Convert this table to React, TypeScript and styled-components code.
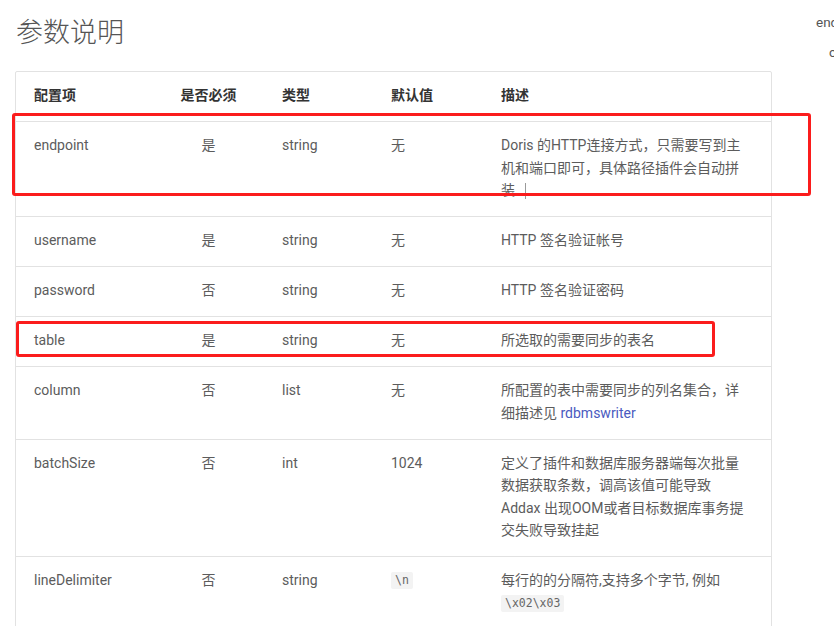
import React from "react";
import styled, { createGlobalStyle } from "styled-components";

const Global = createGlobalStyle`
  html, body {
    margin: 0;
    padding: 0;
    background: #ffffff;
    overflow: hidden;
  }
  body {
    font-family: Roboto, "Noto Sans CJK SC", "Noto Sans", sans-serif;
  }
`;

const Page = styled.div`
  position: relative;
  display: flex;
  align-items: flex-start;
  width: 834px;
  height: 626px;
  overflow: hidden;
`;

const Main = styled.main`
  flex: 0 0 auto;
  width: 757px;
  padding: 15px 0 0 15px;
`;

const Title = styled.h1`
  margin: 0 0 20px 1px;
  font-family: Roboto, "Noto Sans CJK SC", sans-serif;
  font-size: 27px;
  line-height: 36px;
  font-weight: 300;
  color: #555555;
  letter-spacing: 0;
`;

const Table = styled.table`
  width: 757px;
  table-layout: fixed;
  border-collapse: separate;
  border-spacing: 0;
  border: 1px solid #e2e2e2;
  border-radius: 2px;
  font-size: 14px;
  line-height: 22px;
`;

const Th = styled.th<{ $center?: boolean }>`
  padding: 12px 18px 15px;
  text-align: ${(p) => (p.$center ? "center" : "left")};
  font-weight: 700;
  color: #333333;
  vertical-align: top;
`;

const Td = styled.td<{ $center?: boolean; $wide?: boolean }>`
  padding: 12.2px ${(p) => (p.$wide ? "22px" : "18px")} 14.5px 18px;
  border-top: 1px solid #e2e2e2;
  text-align: ${(p) => (p.$center ? "center" : "left")};
  color: #5c5c5c;
  vertical-align: top;
  line-height: 22.4px;
  word-break: normal;
`;

const Code = styled.code`
  display: inline-block;
  padding: 0 4px;
  background: #f3f3f3;
  border-radius: 2px;
  font-family: "DejaVu Sans Mono", "Liberation Mono", monospace;
  font-size: 11.5px;
  line-height: 17px;
  color: #666666;
  vertical-align: 1px;
`;

const Link = styled.a`
  color: #4a5ac0;
  text-decoration: none;
`;

const Caret = styled.span`
  display: inline-block;
  width: 1px;
  height: 16px;
  margin-left: 10px;
  background: #9a9a9a;
  vertical-align: -4px;
`;

const Toc = styled.nav`
  flex: 0 0 auto;
  margin-left: 44px;
  padding-top: 14px;
  display: flex;
  flex-direction: column;
  gap: 14px;
  font-family: Roboto, "Noto Sans CJK SC", sans-serif;
  font-size: 13.5px;
  line-height: 16px;
  color: #555555;
  white-space: nowrap;
`;

const TocItem = styled.span<{ $indent?: boolean }>`
  padding-left: ${(p) => (p.$indent ? "13px" : "0")};
`;

const Mark = styled.div`
  position: absolute;
  border: 3px solid #fb1c1c;
  border-radius: 3px;
  pointer-events: none;
`;

type Row = {
  name: string;
  req: string;
  type: string;
  def: React.ReactNode;
  desc: React.ReactNode;
};

const rows: Row[] = [
  {
    name: "endpoint",
    req: "是",
    type: "string",
    def: "无",
    desc: (
      <>
        Doris 的HTTP连接方式，只需要写到主机和端口即可，具体路径插件会自动拼装
        <Caret />
      </>
    ),
  },
  { name: "username", req: "是", type: "string", def: "无", desc: "HTTP 签名验证帐号" },
  { name: "password", req: "否", type: "string", def: "无", desc: "HTTP 签名验证密码" },
  { name: "table", req: "是", type: "string", def: "无", desc: "所选取的需要同步的表名" },
  {
    name: "column",
    req: "否",
    type: "list",
    def: "无",
    desc: (
      <>
        所配置的表中需要同步的列名集合，详细描述见 <Link href="#">rdbmswriter</Link>
      </>
    ),
  },
  {
    name: "batchSize",
    req: "否",
    type: "int",
    def: "1024",
    desc: "定义了插件和数据库服务器端每次批量数据获取条数，调高该值可能导致 Addax 出现OOM或者目标数据库事务提交失败导致挂起",
  },
  {
    name: "lineDelimiter",
    req: "否",
    type: "string",
    def: <Code>\n</Code>,
    desc: (
      <>
        每行的的分隔符,支持多个字节, 例如 <Code>\x02\x03</Code>
      </>
    ),
  },
];

export default function App() {
  return (
    <Page>
      <Global />
      <Main>
        <Title>参数说明</Title>
        <Table>
          <colgroup>
            <col style={{ width: 137 }} />
            <col style={{ width: 111 }} />
            <col style={{ width: 109 }} />
            <col style={{ width: 110 }} />
            <col />
          </colgroup>
          <thead>
            <tr>
              <Th>配置项</Th>
              <Th $center>是否必须</Th>
              <Th>类型</Th>
              <Th>默认值</Th>
              <Th>描述</Th>
            </tr>
          </thead>
          <tbody>
            {rows.map((r) => (
              <tr key={r.name}>
                <Td>{r.name}</Td>
                <Td $center>{r.req}</Td>
                <Td>{r.type}</Td>
                <Td>{r.def}</Td>
                <Td $wide>{r.desc}</Td>
              </tr>
            ))}
          </tbody>
        </Table>
      </Main>
      <Toc>
        <TocItem>endpoint</TocItem>
        <TocItem $indent>column</TocItem>
      </Toc>
      <Mark style={{ left: 12, top: 113, width: 793, height: 77 }} />
      <Mark style={{ left: 16, top: 321, width: 693, height: 30 }} />
    </Page>
  );
}
